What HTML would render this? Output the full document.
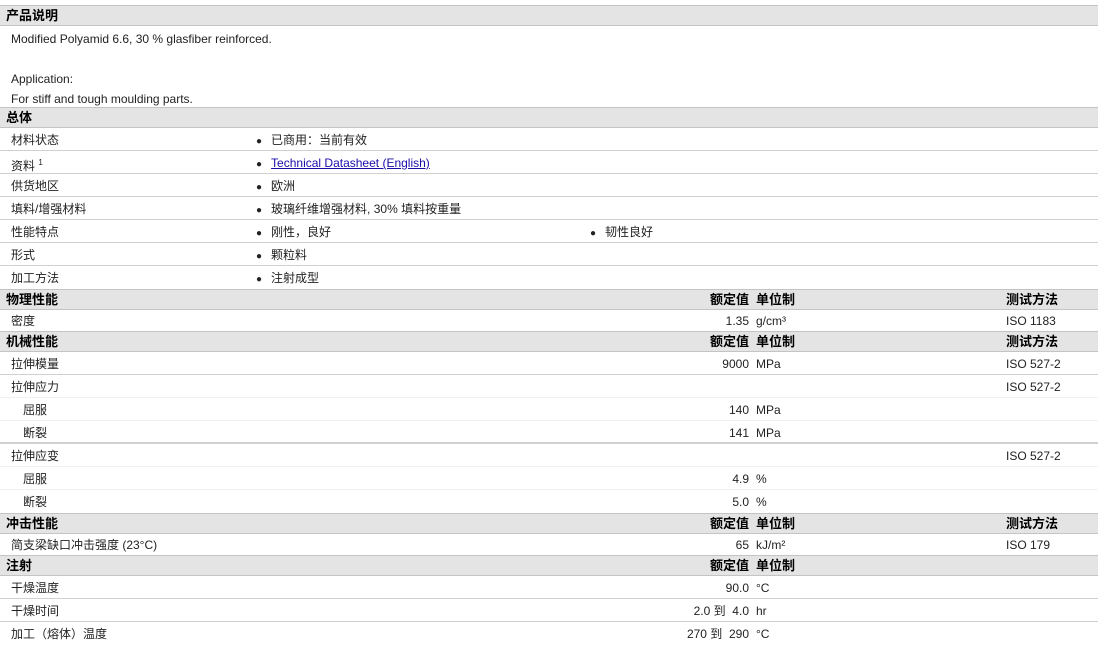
<!DOCTYPE html>
<html><head><meta charset="utf-8"><style>
body{margin:0;width:1098px;height:644px;overflow:hidden;background:#fff;font-family:"Liberation Sans","Noto Sans CJK SC",sans-serif;font-size:12px;color:#222;position:relative}
.h{position:absolute;left:0;width:1098px;background:#e4e4e4;border-top:1px solid #c4c4c4;border-bottom:1px solid #c4c4c4;font-weight:bold;font-size:13px;color:#000;box-sizing:border-box}
.r{position:absolute;left:0;width:1098px;border-bottom:1px solid #d0d0d0;box-sizing:border-box}
.s{border-bottom:1px solid #f0f0f0}
.a{position:absolute;white-space:nowrap}
.v{position:absolute;right:349px;text-align:right;white-space:nowrap}
.u{position:absolute;left:756px;white-space:nowrap}
.t{position:absolute;left:1006px;white-space:nowrap}
.b{position:absolute;left:256px;white-space:nowrap}
.b2{position:absolute;left:590px;white-space:nowrap}
.d{font-size:10px;margin-right:9px}
a{color:#1a0dab;text-decoration:underline}
</style></head><body>
<div class="h" style="top:5px;height:21px;line-height:19px"><span class="a" style="left:6px">产品说明</span></div>
<div class="a" style="left:11px;top:31px;line-height:16px">Modified Polyamid 6.6, 30 % glasfiber reinforced.</div>
<div class="a" style="left:11px;top:71px;line-height:16px">Application:</div>
<div class="a" style="left:11px;top:91px;line-height:16px">For stiff and tough moulding parts.</div>

<div class="h" style="top:107px;height:21px;line-height:19px"><span class="a" style="left:6px">总体</span></div>
<div class="r" style="top:128px;height:23px;line-height:24px"><span class="a" style="left:11px">材料状态</span><span class="b"><span class="d">●</span>已商用：当前有效</span></div>
<div class="r" style="top:151px;height:23px;line-height:24px"><span class="a" style="left:11px">资料 <sup style="font-size:8px">1</sup></span><span class="b"><span class="d">●</span><a>Technical Datasheet (English)</a></span></div>
<div class="r" style="top:174px;height:23px;line-height:24px"><span class="a" style="left:11px">供货地区</span><span class="b"><span class="d">●</span>欧洲</span></div>
<div class="r" style="top:197px;height:23px;line-height:24px"><span class="a" style="left:11px">填料/增强材料</span><span class="b"><span class="d">●</span>玻璃纤维增强材料, 30% 填料按重量</span></div>
<div class="r" style="top:220px;height:23px;line-height:24px"><span class="a" style="left:11px">性能特点</span><span class="b"><span class="d">●</span>刚性，良好</span><span class="b2"><span class="d">●</span>韧性良好</span></div>
<div class="r" style="top:243px;height:23px;line-height:24px"><span class="a" style="left:11px">形式</span><span class="b"><span class="d">●</span>颗粒料</span></div>
<div class="r" style="top:266px;height:23px;line-height:24px;border:0"><span class="a" style="left:11px">加工方法</span><span class="b"><span class="d">●</span>注射成型</span></div>

<div class="h" style="top:289px;height:21px;line-height:19px"><span class="a" style="left:6px">物理性能</span><span class="v">额定值</span><span class="u">单位制</span><span class="t">测试方法</span></div>
<div class="r" style="top:310px;height:21px;line-height:23px;border:0"><span class="a" style="left:11px">密度</span><span class="v">1.35</span><span class="u">g/cm³</span><span class="t">ISO 1183</span></div>

<div class="h" style="top:331px;height:21px;line-height:19px"><span class="a" style="left:6px">机械性能</span><span class="v">额定值</span><span class="u">单位制</span><span class="t">测试方法</span></div>
<div class="r" style="top:352px;height:23px;line-height:24px"><span class="a" style="left:11px">拉伸模量</span><span class="v">9000</span><span class="u">MPa</span><span class="t">ISO 527-2</span></div>
<div class="r s" style="top:375px;height:23px;line-height:24px"><span class="a" style="left:11px">拉伸应力</span><span class="t">ISO 527-2</span></div>
<div class="r s" style="top:398px;height:23px;line-height:24px"><span class="a" style="left:23px">屈服</span><span class="v">140</span><span class="u">MPa</span></div>
<div class="r" style="top:421px;height:23px;line-height:24px;border-bottom:2px solid #d0d0d0"><span class="a" style="left:23px">断裂</span><span class="v">141</span><span class="u">MPa</span></div>
<div class="r s" style="top:444px;height:23px;line-height:25px"><span class="a" style="left:11px">拉伸应变</span><span class="t">ISO 527-2</span></div>
<div class="r s" style="top:467px;height:23px;line-height:24px"><span class="a" style="left:23px">屈服</span><span class="v">4.9</span><span class="u">%</span></div>
<div class="r" style="top:490px;height:23px;line-height:24px;border:0"><span class="a" style="left:23px">断裂</span><span class="v">5.0</span><span class="u">%</span></div>

<div class="h" style="top:513px;height:21px;line-height:19px"><span class="a" style="left:6px">冲击性能</span><span class="v">额定值</span><span class="u">单位制</span><span class="t">测试方法</span></div>
<div class="r" style="top:534px;height:21px;line-height:23px;border:0"><span class="a" style="left:11px">简支梁缺口冲击强度 (23°C)</span><span class="v">65</span><span class="u">kJ/m²</span><span class="t">ISO 179</span></div>

<div class="h" style="top:555px;height:21px;line-height:19px"><span class="a" style="left:6px">注射</span><span class="v">额定值</span><span class="u">单位制</span></div>
<div class="r" style="top:576px;height:23px;line-height:24px"><span class="a" style="left:11px">干燥温度</span><span class="v">90.0</span><span class="u">°C</span></div>
<div class="r" style="top:599px;height:23px;line-height:24px"><span class="a" style="left:11px">干燥时间</span><span class="v">2.0 到 &nbsp;4.0</span><span class="u">hr</span></div>
<div class="r" style="top:622px;height:23px;line-height:24px;border:0"><span class="a" style="left:11px">加工（熔体）温度</span><span class="v">270 到 &nbsp;290</span><span class="u">°C</span></div>
</body></html>
